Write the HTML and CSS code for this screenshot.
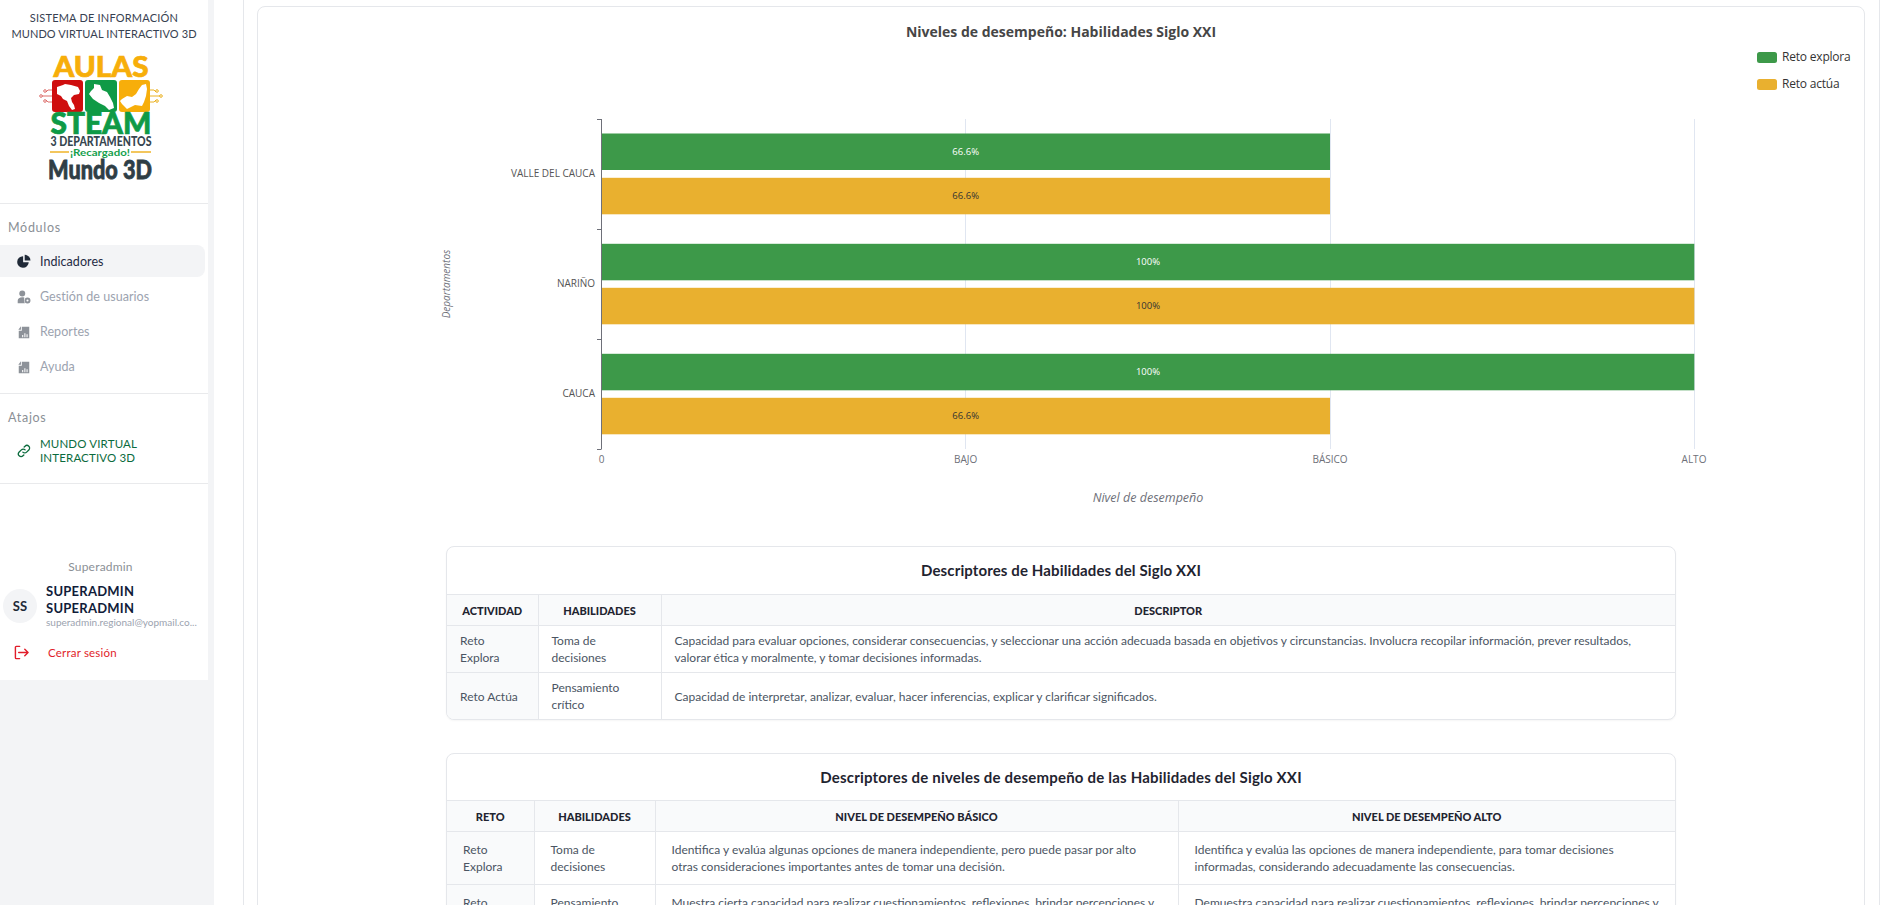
FILE: index.html
```html
<!DOCTYPE html>
<html lang="es">
<head>
<meta charset="utf-8">
<title>Indicadores</title>
<link rel="stylesheet" href="styles.css">
</head>
<body>
<div class="app">
  <aside class="rail">
    <div class="side">
      <header class="brand">
        <p class="brand-title">SISTEMA DE INFORMACIÓN</p>
        <p class="brand-sub">MUNDO VIRTUAL INTERACTIVO 3D</p>
        <svg class="logo" viewBox="0 0 128 134" width="128" height="134" aria-label="Aulas STEAM">
          <text class="lg lg-aulas" x="63" y="25" text-anchor="middle" textLength="95" lengthAdjust="spacingAndGlyphs">AULAS</text>
          <g fill="none" stroke="#d9605c" stroke-width=".9"><path d="M14 38h-4l-2 2M14 44H4M14 50h-4l-2-2"/><circle cx="7" cy="39" r="1.300"/><circle cx="3" cy="44" r="1.300"/><circle cx="7" cy="49" r="1.300"/></g>
          <g fill="none" stroke="#e8a90c" stroke-width=".9"><path d="M112 38h4l2 2M112 44h10M112 50h4l2-2"/><circle cx="119" cy="39" r="1.300"/><circle cx="123" cy="44" r="1.300"/><circle cx="119" cy="49" r="1.300"/></g>
          <rect x="14" y="28" width="31" height="32" rx="3" fill="#cf0e0e"/>
          <rect x="47" y="28" width="32" height="32" rx="3" fill="#0f9a46"/>
          <rect x="81" y="28" width="31" height="32" rx="3" fill="#f7ae0a"/>
          <path d="M19 35l6-2 2-1 6 1 7 2 2 4-1 3-5 1-3 3 1 4 2 3 1 4-3 1-3-4-2-5-4-2-2-3-4-2v-3z" fill="#fff"/>
          <path d="M56 32l6 1 2 5 5 2 3 5 3 6 1 5-5 2-4-4-6-3-6-4-4-5 2-3 3-3z" fill="#fff"/>
          <path d="M84 47l5-3 5 1 4-3 3-5 3-4 4-1 1 5-1 7-2 6-2 4-7-1-8 4-3-3-2-2-2-3z" fill="#fff"/>
          <text class="lg lg-steam" x="63" y="82" text-anchor="middle" textLength="101" lengthAdjust="spacingAndGlyphs">STEAM</text>
          <text class="lg lg-dep" x="63" y="94" text-anchor="middle" textLength="101" lengthAdjust="spacingAndGlyphs">3 DEPARTAMENTOS</text>
          <path d="M12 100h19M93 100h20" stroke="#f0b429" stroke-width="1.300"/>
          <text class="lg lg-rec" x="62" y="103.500" text-anchor="middle" textLength="60" lengthAdjust="spacingAndGlyphs">¡Recargado!</text>
          <text class="lg lg-mundo" x="62" y="127" text-anchor="middle" textLength="104" lengthAdjust="spacingAndGlyphs">Mundo 3D</text>
        </svg>
      </header>

      <section class="group group-mods">
        <h2 class="group-title">Módulos</h2>
        <a class="item item-active">
          <svg class="ico" viewBox="0 0 16 16"><path d="M7 2.600A6.600 6.600 0 1 0 13.400 9.300H7z" fill="#1f2937"/><path d="M8.800 .8v6.600h6.600A6.600 6.600 0 0 0 8.800 .8z" fill="#1f2937"/></svg>
          <span>Indicadores</span>
        </a>
        <a class="item">
          <svg class="ico" viewBox="0 0 16 16" fill="#8d9299"><circle cx="6" cy="4" r="3.400"/><path d="M.8 15v-2.600C.8 10 3 8.400 6 8.400c1 0 1.800.2 2.500.5-.8 1.700-.7 4 .5 6.100z"/><circle cx="12" cy="12" r="3.400"/><circle cx="12" cy="12" r="1.200" fill="#fff"/></svg>
          <span>Gestión de usuarios</span>
        </a>
        <a class="item">
          <svg class="ico" viewBox="0 0 16 16"><path d="M2 15V6.500h3.500V2H14v13z" fill="#8d9299"/><path d="M1.500 5.500 4.500 1.500v4z" fill="#8d9299"/><path d="M6.500 14v-2.500M9 14V9.500M11.500 14v-3.500" stroke="#fff" stroke-width="1.200"/></svg>
          <span>Reportes</span>
        </a>
        <a class="item">
          <svg class="ico" viewBox="0 0 16 16"><path d="M2 15V6.500h3.500V2H14v13z" fill="#8d9299"/><path d="M1.500 5.500 4.500 1.500v4z" fill="#8d9299"/><path d="M6.500 14v-2.500M9 14V9.500M11.500 14v-3.500" stroke="#fff" stroke-width="1.200"/></svg>
          <span>Ayuda</span>
        </a>
      </section>

      <section class="group group-links">
        <h2 class="group-title">Atajos</h2>
        <a class="shortcut">
          <svg class="ico" viewBox="0 0 16 16" fill="none" stroke="#0b6b3d" stroke-width="1.500" stroke-linecap="round"><path d="M6.700 9.300a3 3 0 0 0 4.300 0l2.500-2.500a3 3 0 0 0-4.300-4.300l-1 1"/><path d="M9.300 6.700a3 3 0 0 0-4.300 0L2.500 9.200a3 3 0 0 0 4.300 4.300l1-1"/></svg>
          <span>MUNDO VIRTUAL<br>INTERACTIVO 3D</span>
        </a>
      </section>

      <section class="user">
        <p class="user-role">Superadmin</p>
        <div class="user-row">
          <div class="avatar">SS</div>
          <div class="user-info">
            <p class="user-name">SUPERADMIN<br>SUPERADMIN</p>
            <p class="user-mail">superadmin.regional@yopmail.co...</p>
          </div>
        </div>
        <a class="logout">
          <svg class="logout-ico" viewBox="0 0 16 16" fill="none" stroke="#e11d2a" stroke-width="1.500" stroke-linecap="round" stroke-linejoin="round"><path d="M6 1.500H2.500a1 1 0 0 0-1 1v11a1 1 0 0 0 1 1H6"/><path d="M5 8h10M11.500 4.500 15 8l-3.500 3.500"/></svg>
          <span>Cerrar sesión</span>
        </a>
      </section>
    </div>
  </aside>

  <main class="main">
    <div class="panel">
      <article class="card">
        <svg class="chart" viewBox="258 7 1606 513" width="1606" height="513">
          <text class="c-title" x="1061" y="37" text-anchor="middle">Niveles de desempeño: Habilidades Siglo XXI</text>
          <rect x="1757" y="52" width="20" height="11" rx="2.500" fill="#3d9949"/>
          <text class="c-legend" x="1782" y="61">Reto explora</text>
          <rect x="1757" y="79" width="20" height="11" rx="2.500" fill="#e9b02f"/>
          <text class="c-legend" x="1782" y="88">Reto actúa</text>

          <g class="c-grid">
            <path d="M965.500 119v330M1330.500 119v330M1694.500 119v330"/>
          </g>

          <rect x="601.500" y="133.500" width="728.500" height="36.500" fill="#3d9949"/>
          <rect x="601.500" y="177.800" width="728.500" height="36.500" fill="#e9b02f"/>
          <rect x="601.500" y="243.800" width="1092.800" height="36.500" fill="#3d9949"/>
          <rect x="601.500" y="287.800" width="1092.800" height="36.500" fill="#e9b02f"/>
          <rect x="601.500" y="353.800" width="1092.800" height="36.500" fill="#3d9949"/>
          <rect x="601.500" y="397.800" width="728.500" height="36.500" fill="#e9b02f"/>

          <path class="c-axis" d="M601.500 119v330M597 119.500h4.500M597 229.500h4.500M597 339.500h4.500M597 449.500h4.500"/>

          <text class="c-val c-val-w" x="965.700" y="155">66.6%</text>
          <text class="c-val" x="965.700" y="199">66.6%</text>
          <text class="c-val c-val-w" x="1148" y="265">100%</text>
          <text class="c-val" x="1148" y="309">100%</text>
          <text class="c-val c-val-w" x="1148" y="375">100%</text>
          <text class="c-val" x="965.700" y="419">66.6%</text>

          <text class="c-cat" x="595" y="177">VALLE DEL CAUCA</text>
          <text class="c-cat" x="595" y="287">NARIÑO</text>
          <text class="c-cat" x="595" y="397">CAUCA</text>

          <text class="c-tick" x="601.500" y="463">0</text>
          <text class="c-tick" x="965.700" y="463">BAJO</text>
          <text class="c-tick" x="1330" y="463">BÁSICO</text>
          <text class="c-tick" x="1694" y="463">ALTO</text>

          <text class="c-name" x="1148" y="502">Nivel de desempeño</text>
          <text class="c-name c-name-y" transform="translate(450 284) rotate(-90)">Departamentos</text>
        </svg>

        <section class="tbl-card">
          <h3 class="tbl-title">Descriptores de Habilidades del Siglo XXI</h3>
          <table class="tbl tbl-a">
            <thead>
              <tr><th class="a1">ACTIVIDAD</th><th class="a2">HABILIDADES</th><th>DESCRIPTOR</th></tr>
            </thead>
            <tbody>
              <tr><td class="side-cell">Reto Explora</td><td>Toma de decisiones</td><td>Capacidad para evaluar opciones, considerar consecuencias, y seleccionar una acción adecuada basada en objetivos y circunstancias. Involucra recopilar información, prever resultados, valorar ética y moralmente, y tomar decisiones informadas.</td></tr>
              <tr><td class="side-cell">Reto Actúa</td><td>Pensamiento crítico</td><td>Capacidad de interpretar, analizar, evaluar, hacer inferencias, explicar y clarificar significados.</td></tr>
            </tbody>
          </table>
        </section>

        <section class="tbl-card tbl-card-b">
          <h3 class="tbl-title">Descriptores de niveles de desempeño de las Habilidades del Siglo XXI</h3>
          <table class="tbl tbl-b">
            <thead>
              <tr><th class="b1">RETO</th><th class="b2">HABILIDADES</th><th class="b3">NIVEL DE DESEMPEÑO BÁSICO</th><th>NIVEL DE DESEMPEÑO ALTO</th></tr>
            </thead>
            <tbody>
              <tr><td class="side-cell">Reto Explora</td><td>Toma de decisiones</td><td>Identifica y evalúa algunas opciones de manera independiente, pero puede pasar por alto otras consideraciones importantes antes de tomar una decisión.</td><td>Identifica y evalúa las opciones de manera independiente, para tomar decisiones informadas, considerando adecuadamente las consecuencias.</td></tr>
              <tr><td class="side-cell">Reto Actúa</td><td>Pensamiento crítico</td><td>Muestra cierta capacidad para realizar cuestionamientos, reflexiones, brindar percepciones y argumentos de manera básica.</td><td>Demuestra capacidad para realizar cuestionamientos, reflexiones, brindar percepciones y argumentos sólidos.</td></tr>
            </tbody>
          </table>
        </section>
      </article>
    </div>
  </main>
</div>
</body>
</html>
```
FILE: styles.css
```css
* { box-sizing: border-box; }
html, body { margin: 0; height: 905px; overflow: hidden; background: #fff; }
body { font-family: "Lato", "Noto Sans", sans-serif; color: #374151; }
p, h2, h3 { margin: 0; }

.app { display: flex; height: 905px; }

/* Sidebar */
.rail { width: 214px; flex: none; background: #f3f4f6; }
.side { width: 208px; height: 680px; background: #fff; display: flex; flex-direction: column; }
.brand { height: 204px; border-bottom: 1px solid #e9eaec; padding-top: 10px; text-align: center; }
.brand-title { font-size: 11px; line-height: 16px; color: #374151; letter-spacing: .2px; }
.brand-sub { font-size: 11px; line-height: 16px; color: #374151; letter-spacing: .1px; white-space: nowrap; }
.logo { display: block; margin: 10px 0 0 38px; }
.lg { font-family: "Lato", sans-serif; font-weight: 900; }
.lg-aulas { font-size: 29px; fill: #f7ae0a; stroke: #f7ae0a; stroke-width: .7px; }
.lg-steam { font-size: 30px; fill: #0f9a46; stroke: #0f9a46; stroke-width: .7px; }
.lg-dep { font-size: 12.500px; fill: #36454f; }
.lg-rec { font-size: 10px; fill: #14a04c; font-weight: 700; }
.lg-mundo { font-size: 27px; fill: #2f3e46; stroke: #2f3e46; stroke-width: .8px; }

.group { border-bottom: 1px solid #e9eaec; }
.group-mods { height: 190px; padding-top: 15px; }
.group-links { height: 90px; padding-top: 15px; }
.group-title { font-size: 12.500px; line-height: 17px; font-weight: 400; color: #8b9096; letter-spacing: .7px; padding-left: 8px; }

.item { display: flex; align-items: center; gap: 9px; height: 35px; padding-left: 17px; font-size: 12.500px; color: #9ca3af; letter-spacing: .05px; }
.item-active { height: 32px; margin: 9px 3px 2px 0; background: #f3f4f6; border-radius: 0 8px 8px 0; color: #1f2a44; }
.ico { width: 14px; height: 14px; flex: none; }

.shortcut { display: flex; align-items: center; gap: 9px; margin-top: 11px; padding-left: 17px; font-size: 11.500px; line-height: 14px; color: #0b6b3d; letter-spacing: .15px; }

.user { padding-top: 76px; margin-top: -1px; }
.user-role { width: 201px; text-align: center; font-size: 12px; line-height: 16px; color: #8b9096; letter-spacing: .2px; }
.user-row { display: flex; align-items: center; gap: 9px; padding-left: 3px; margin-top: 8px; }
.avatar { width: 34px; height: 34px; border-radius: 50%; background: #f3f4f6; display: flex; align-items: center; justify-content: center; font-size: 13px; font-weight: 700; color: #1f2937; }
.user-info { width: 154px; }
.user-name { font-size: 13px; line-height: 17px; font-weight: 700; color: #111c3a; letter-spacing: .25px; }
.user-mail { font-size: 10px; line-height: 11px; color: #9ca3af; white-space: nowrap; }
.logout { display: flex; align-items: center; gap: 19px; padding-left: 14px; margin-top: 17px; font-size: 11.500px; color: #e11d2a; letter-spacing: .2px; }
.logout-ico { width: 15px; height: 15px; flex: none; }

/* Main */
.main { flex: 1; min-width: 0; padding: 0 24px 0 29px; }
.panel { height: 905px; border: solid #e5e7eb; border-width: 0 1px; padding: 6px 14px 0 13px; overflow: hidden; }
.card { border: 1px solid #e5e7eb; border-radius: 8px; background: #fff; height: 1200px; }
.chart { display: block; }
.c-title { font-family: "Open Sans", sans-serif; font-size: 14px; font-weight: 700; fill: #464646; }
.c-legend { font-family: "Open Sans", sans-serif; font-size: 12px; letter-spacing: -.2px; fill: #333; }
.c-grid path { fill: none; stroke: #e0e6f1; stroke-width: 1; }
.c-axis { fill: none; stroke: #6e7079; stroke-width: 1; }
.c-val { font-family: "Open Sans", sans-serif; font-size: 9.500px; fill: #333; text-anchor: middle; }
.c-val-w { fill: #fff; }
.c-cat { font-family: "Open Sans", sans-serif; font-size: 10px; fill: #555; text-anchor: end; }
.c-tick { font-family: "Open Sans", sans-serif; font-size: 10px; fill: #6e7079; text-anchor: middle; }
.c-name { font-family: "Open Sans", sans-serif; font-size: 12.500px; font-style: italic; fill: #6e7079; text-anchor: middle; }
.c-name-y { font-size: 10px; }

.tbl-card { width: 1230px; margin: 26px auto 0; border: 1px solid #e5e7eb; border-radius: 8px; overflow: hidden; background: #fff; box-shadow: 0 1px 2px rgba(0,0,0,.04); }
.tbl-card-b { margin-top: 33px; }
.tbl-title { height: 47px; line-height: 47px; text-align: center; font-size: 15px; font-weight: 700; color: #1f2430; letter-spacing: .12px; }
.tbl-card-b .tbl-title { height: 46px; letter-spacing: .2px; }
.tbl { width: 100%; border-collapse: collapse; table-layout: fixed; font-size: 12px; line-height: 17px; }
.tbl th { height: 31px; background: #f9fafb; font-size: 11px; font-weight: 900; color: #1f2430; border: 1px solid #e5e7eb; padding: 0; text-align: center; }
.tbl td { border: 1px solid #e5e7eb; padding: 6px 13px; color: #4b5563; }
.tbl td:first-child, .tbl th:first-child { border-left: 0; }
.tbl td:last-child, .tbl th:last-child { border-right: 0; }
.tbl tr:last-child td { border-bottom: 0; }
.side-cell { background: #f9fafb; }
.a1 { width: 91px; }
.a2 { width: 123px; }
.b1 { width: 87px; }
.b2 { width: 121px; }
.b3 { width: 523px; }
.tbl-b td { padding: 9px 19px 9px 16px; }
.tbl-b td:last-child { padding-right: 10px; }
```
